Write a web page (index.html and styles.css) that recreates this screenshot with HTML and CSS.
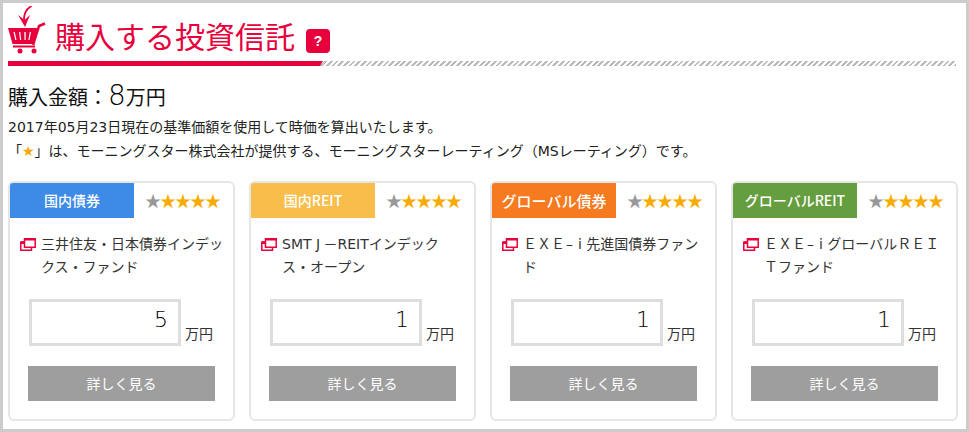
FILE: index.html
```
<!DOCTYPE html>
<html lang="ja">
<head>
<meta charset="utf-8">
<title>購入する投資信託</title>
<link rel="stylesheet" href="styles.css">
</head>
<body>
<header class="head">
  <svg class="cart" viewBox="0 0 38 50" width="38" height="50" aria-hidden="true">
    <path d="M23.500 0C18 3 15.500 8 16 16" fill="none" stroke="#e8003c" stroke-width="1.800"/>
    <path d="M10 9L16.500 14L22 9L17 21Z" fill="#e8003c"/>
    <path d="M0 22H29.500L26 38H4.500Z" fill="#e8003c"/>
    <path d="M5.500 26H6.800L8.500 34H7.300ZM11 26H12.300L13.200 34H12ZM16.300 26H17.700V34H16.500ZM21.800 26H23L21.500 34H20.300Z" fill="#fff"/>
    <path d="M5 40.500H27" fill="none" stroke="#e8003c" stroke-width="2"/>
    <path d="M25 39L31 20L37 17.500" fill="none" stroke="#e8003c" stroke-width="2.500"/>
    <circle cx="12" cy="45" r="2.500" fill="#e8003c"/>
    <circle cx="26" cy="45" r="2.500" fill="#e8003c"/>
  </svg>
  <h1 class="title">購入する投資信託</h1>
  <span class="help">?</span>
</header>
<div class="rule"><div class="rule-red"></div></div>
<p class="amount">購入金額：<span class="num">8</span>万円</p>
<p class="note">2017年05月23日現在の基準価額を使用して時価を算出いたします。</p>
<p class="note note-2">「<span class="orange">★</span>」は、モーニングスター株式会社が提供する、モーニングスターレーティング（MSレーティング）です。</p>
<main class="cards">
  <article class="card">
    <div class="card-top"><div class="tab blue">国内債券</div><div class="stars"><span class="grey">★</span>★★★★</div></div>
    <div class="name"><svg class="ext" viewBox="0 0 16 13" width="16" height="13" aria-hidden="true"><path d="M4.500 .8H15.200V9.200H4.500ZM.8 4H4.500M.8 4V12.200H11.500V9.200" fill="none" stroke="#e8003c" stroke-width="1.500"/><path d="M4 0H16V2.500H4ZM0 3.500H4V6H0Z" fill="#e8003c"/></svg><span class="name-text">三井住友・日本債券インデッ<br>クス・ファンド</span></div>
    <div class="qty"><div class="input">5</div><span class="unit">万円</span></div>
    <a class="btn">詳しく見る</a>
  </article>
  <article class="card">
    <div class="card-top"><div class="tab yellow">国内REIT</div><div class="stars"><span class="grey">★</span>★★★★</div></div>
    <div class="name"><svg class="ext" viewBox="0 0 16 13" width="16" height="13" aria-hidden="true"><path d="M4.500 .8H15.200V9.200H4.500ZM.8 4H4.500M.8 4V12.200H11.500V9.200" fill="none" stroke="#e8003c" stroke-width="1.500"/><path d="M4 0H16V2.500H4ZM0 3.500H4V6H0Z" fill="#e8003c"/></svg><span class="name-text">SMT <span class="j">J</span>－REITインデック<br>ス・オープン</span></div>
    <div class="qty"><div class="input">1</div><span class="unit">万円</span></div>
    <a class="btn">詳しく見る</a>
  </article>
  <article class="card">
    <div class="card-top"><div class="tab tab-wide orange-bg">グローバル債券</div><div class="stars"><span class="grey">★</span>★★★★</div></div>
    <div class="name"><svg class="ext" viewBox="0 0 16 13" width="16" height="13" aria-hidden="true"><path d="M4.500 .8H15.200V9.200H4.500ZM.8 4H4.500M.8 4V12.200H11.500V9.200" fill="none" stroke="#e8003c" stroke-width="1.500"/><path d="M4 0H16V2.500H4ZM0 3.500H4V6H0Z" fill="#e8003c"/></svg><span class="name-text">ＥＸＥ<span class="dash">–</span>i 先進国債券ファン<br>ド</span></div>
    <div class="qty"><div class="input">1</div><span class="unit">万円</span></div>
    <a class="btn">詳しく見る</a>
  </article>
  <article class="card">
    <div class="card-top"><div class="tab green">グローバルREIT</div><div class="stars"><span class="grey">★</span>★★★★</div></div>
    <div class="name"><svg class="ext" viewBox="0 0 16 13" width="16" height="13" aria-hidden="true"><path d="M4.500 .8H15.200V9.200H4.500ZM.8 4H4.500M.8 4V12.200H11.500V9.200" fill="none" stroke="#e8003c" stroke-width="1.500"/><path d="M4 0H16V2.500H4ZM0 3.500H4V6H0Z" fill="#e8003c"/></svg><span class="name-text">ＥＸＥ<span class="dash">–</span>i グローバルＲＥＩ<br>Ｔファンド</span></div>
    <div class="qty"><div class="input">1</div><span class="unit">万円</span></div>
    <a class="btn">詳しく見る</a>
  </article>
</main>
</body>
</html>
```
FILE: styles.css
```
* { box-sizing: border-box; }
html, body { margin: 0; height: 432px; overflow: hidden; }
body {
  border: 3px solid #ccc;
  padding: 3px 5px 0;
  background: #fff;
  color: #222;
  font-family: "DejaVu Sans", "Noto Sans CJK JP", sans-serif;
}
.head { display: flex; align-items: flex-start; height: 55px; }
.cart { flex: none; }
.title {
  margin: 13px 0 0 9px;
  font-size: 30px;
  line-height: 38px;
  font-weight: 400;
  color: #e8003c;
  white-space: nowrap;
}
.help {
  width: 24px; height: 24px;
  margin: 23px 0 0 11px;
  border-radius: 4px;
  background: #e8003c;
  color: #fff;
  font: 700 14px/24px "Liberation Sans", sans-serif;
  text-align: center;
}
.rule {
  height: 5px;
  margin-right: 5px;
  background: repeating-linear-gradient(135deg, #bbb 0 2px, #fff 2px 4px);
}
.rule-red {
  width: 315px;
  height: 5px;
  background: #e8003c;
  clip-path: polygon(0 0, 100% 0, 312px 100%, 0 100%);
}
.amount {
  margin: 14px 0 0;
  height: 32px;
  font-size: 20px;
  line-height: 32px;
  color: #111;
}
.num { font-size: 28px; font-weight: 200; line-height: 32px; color: #000; }
.note { margin: 3px 0 0; font-size: 14px; line-height: 24px; color: #222; white-space: nowrap; }
.note-2 { margin-top: 0; }
.orange { color: #f5a800; }
.cards {
  display: grid;
  grid-template-columns: repeat(4, 227px);
  column-gap: 14px;
  margin-top: 18px;
}
.card {
  height: 240px;
  border: 2px solid #e6e6e6;
  border-radius: 6px;
  background: #fff;
}
.card-top { display: flex; height: 35px; }
.tab {
  width: 124px;
  color: #fff;
  font-family: "Noto Sans CJK JP", sans-serif;
  font-size: 14px;
  font-weight: 500;
  line-height: 35px;
  text-align: center;
  white-space: nowrap;
  border-top-left-radius: 3px;
}
.tab-wide { font-size: 15px; }
.blue { background: #3d8be6; }
.yellow { background: #f9bd4b; }
.orange-bg { background: #f67a20; }
.green { background: #659e3e; }
.stars {
  margin-left: 11px;
  font: 16px/35px "Noto Sans CJK JP", sans-serif;
  letter-spacing: -1px;
  color: #f9ac00;
  white-space: nowrap;
}
.grey { color: #999; }
.name {
  display: flex;
  align-items: flex-start;
  gap: 5px;
  margin: 15px 10px 0;
  height: 46px;
  font-size: 14px;
  line-height: 23px;
  color: #333;
}
.ext { flex: none; margin-top: 5px; }
.name-text { min-width: 0; white-space: nowrap; }
.j { letter-spacing: 3.400px; }
.dash { margin-left: 1px; letter-spacing: 5px; }
.qty { display: flex; align-items: flex-end; gap: 4px; margin: 20px 0 0 19px; }
.input {
  width: 152px;
  height: 47px;
  padding-right: 10px;
  border: 3px solid #ddd;
  font-size: 22px;
  font-weight: 200;
  line-height: 35px;
  text-align: right;
  color: #000;
}
.unit { font-size: 14px; line-height: 24px; color: #333; }
.btn {
  display: block;
  height: 35px;
  margin: 20px 18px 0 18px;
  background: #9e9e9e;
  color: #fff;
  font-family: "Noto Sans CJK JP", sans-serif;
  font-size: 14px;
  line-height: 35px;
  text-align: center;
}
```
